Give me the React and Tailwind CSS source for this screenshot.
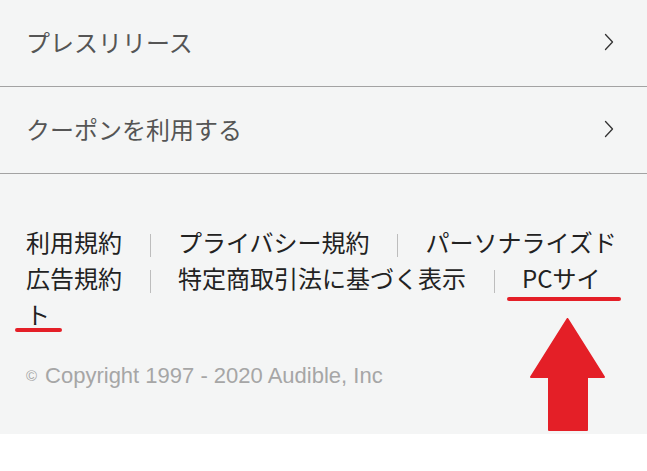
import React from "react";

const jp = { fontFamily: '"Noto Sans CJK JP", "Noto Sans", sans-serif' };

function Chevron() {
  return (
    <svg width="10" height="18" viewBox="0 0 10 18" fill="none" className="shrink-0">
      <path d="M1.5 1.5 L8.5 9 L1.5 16.5" stroke="#333" strokeWidth="1.3" strokeLinecap="round" strokeLinejoin="round" />
    </svg>
  );
}

function MenuRow({ label }) {
  return (
    <a
      href="#"
      className="flex h-[87px] items-center justify-between border-b border-[#a3a3a3] pl-[26px] pr-[33px] pb-[2px] text-[24px] text-[#555]"
      style={jp}
    >
      <span>{label}</span>
      <Chevron />
    </a>
  );
}

function Sep() {
  return <span className="mx-[27.5px] inline-block h-[23px] w-px translate-y-[5px] bg-[#bdbdbd] align-baseline" />;
}

const links = ["利用規約", "プライバシー規約", "パーソナライズド広告規約", "特定商取引法に基づく表示", "PCサイト"];

export default function App() {
  return (
    <div className="relative w-[647px] bg-white">
      <div className="bg-[#f4f5f5]">
        <MenuRow label="プレスリリース" />
        <MenuRow label="クーポンを利用する" />

        <footer className="pl-[26px] pr-[27px] pt-[50px] pb-[43px]">
          <p className="text-[24px] leading-[36px] text-[#222]" style={jp}>
            {links.map((l, i) => (
              <React.Fragment key={l}>
                {i > 0 && <Sep />}
                <a href="#">{l}</a>
              </React.Fragment>
            ))}
          </p>
          <p
            className="mt-[29px] text-[22px] leading-[30px] text-[#a6a6a6]"
            style={{ fontFamily: '"Liberation Sans", Arial, sans-serif' }}
          >
            <span className="mr-[8px] text-[15px] align-[2px]">©</span>
            Copyright 1997 - 2020 Audible, Inc
          </p>
        </footer>
      </div>
      <div className="h-[35px]" />

      {/* red annotation marks */}
      <div className="absolute left-[507px] top-[297px] h-[4px] w-[114px] rounded-full bg-[#e41f27]" />
      <div className="absolute left-[15px] top-[328px] h-[4px] w-[47px] rounded-full bg-[#e41f27]" />
      <svg className="absolute left-[530px] top-[318px]" width="76" height="114" viewBox="0 0 76 114">
        <polygon
          points="37.5,1 74,59 57,59 57,112 19,112 19,59 1,59"
          fill="#e41f27"
          stroke="#e41f27"
          strokeWidth="2"
          strokeLinejoin="round"
        />
      </svg>
    </div>
  );
}
